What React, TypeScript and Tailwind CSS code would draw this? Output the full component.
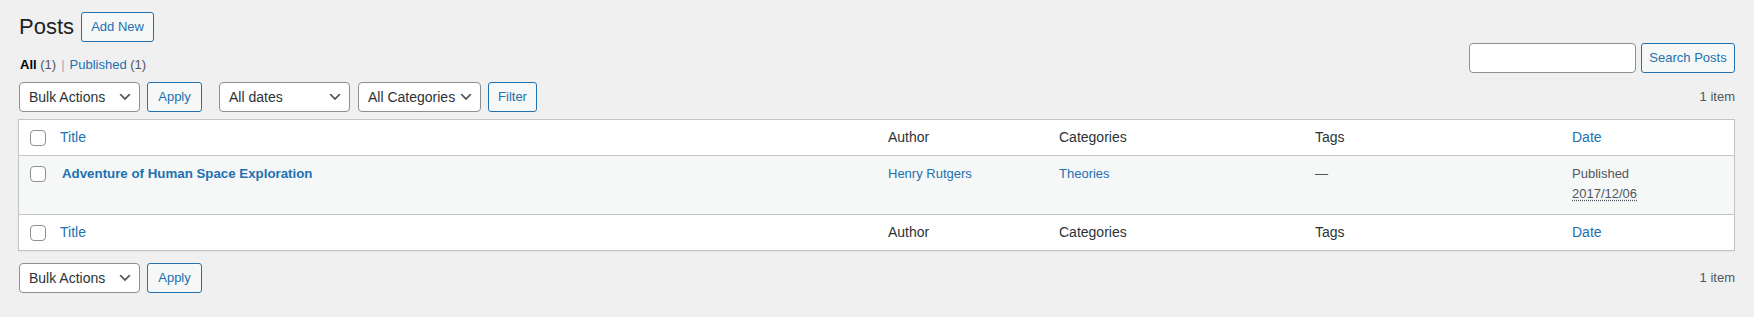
import React from "react";

// Chevron used by the WP-style selects
const Chevron = () => (
  <svg viewBox="0 0 20 20" className="w-[16px] h-[16px] absolute right-[6px] top-1/2 -translate-y-1/2" fill="#50575e">
    <path d="M5 6l5 5 5-5 2 1-7 7-7-7 2-1z" />
  </svg>
);

interface SelectProps {
  label: string;
  width: string;
  className?: string;
}

const FakeSelect = ({ label, width, className = "" }: SelectProps) => (
  <div
    className={`relative h-[30px] ${width} border border-[#8c8f94] rounded-[4px] bg-white text-[14px] text-[#2c3338] pl-[9px] flex items-center ${className}`}
  >
    {label}
    <Chevron />
  </div>
);

const Button = ({ label, width, className = "" }: { label: string; width: string; className?: string }) => (
  <button
    type="button"
    className={`h-[30px] ${width} border border-[#2271b1] rounded-[3px] bg-[#f6f7f7] text-[13px] text-[#2271b1] flex items-center justify-center ${className}`}
  >
    {label}
  </button>
);

const Checkbox = () => (
  <span className="block w-[16px] h-[16px] border border-[#8c8f94] rounded-[4px] bg-white ml-[11px]" />
);

// Header / footer row of the list table
const HeadRow = () => (
  <div className="flex h-[35px] items-center text-[14px] text-[#2c3338]">
    <div className="w-[31px] shrink-0">
      <Checkbox />
    </div>
    <div className="flex-1 pl-[10px] text-[#2271b1]">Title</div>
    <div className="w-[171px] pl-[10px]">Author</div>
    <div className="w-[256px] pl-[10px]">Categories</div>
    <div className="w-[257px] pl-[10px]">Tags</div>
    <div className="w-[172px] pl-[10px] text-[#2271b1]">Date</div>
  </div>
);

const TableNav = ({ top = false }: { top?: boolean }) => (
  <div className="flex items-center h-[30px]">
    <FakeSelect label="Bulk Actions" width="w-[121px]" className="ml-[1px]" />
    <Button label="Apply" width="w-[55px]" className="ml-[7px]" />
    {top && (
      <>
        <FakeSelect label="All dates" width="w-[131px]" className="ml-[17px]" />
        <FakeSelect label="All Categories" width="w-[123px]" className="ml-[8px]" />
        <Button label="Filter" width="w-[49px]" className="ml-[7px]" />
      </>
    )}
    <span className="ml-auto text-[13px] text-[#50575e]">1 item</span>
  </div>
);

export default function App() {
  return (
    <div className="min-h-[317px] w-full bg-[#f0f0f1] font-['Liberation_Sans',Arial,sans-serif] text-[#3c434a] overflow-hidden">
      <div className="pl-[18px] pr-[19px]">
        {/* Title row */}
        <div className="flex items-center h-[27px] mt-[13px]">
          <h1 className="text-[22px] leading-none text-[#1d2327] ml-[1px]">Posts</h1>
          <Button label="Add New" width="w-[73px]" className="ml-[7px] h-[27px]" />
        </div>

        {/* Views + search */}
        <div className="flex justify-between items-start h-[30px] mt-[3px]">
          <div className="pt-[12px] text-[13px] leading-[20px] ml-[2px]">
            <span className="text-black font-semibold">All</span>
            <span className="text-[#50575e]"> (1)</span>
            <span className="text-[#a7aaad] mx-[5px]">|</span>
            <span className="text-[#2271b1]">Published</span>
            <span className="text-[#50575e]"> (1)</span>
          </div>
          <div className="flex gap-[5px]">
            <div className="w-[167px] h-[30px] bg-white border border-[#8c8f94] rounded-[4px]" />
            <Button label="Search Posts" width="w-[94px]" />
          </div>
        </div>

        <div className="mt-[9px]">
          <TableNav top />
        </div>

        {/* List table */}
        <div className="mt-[7px] bg-white border border-[#c3c4c7] shadow-[0_1px_1px_rgba(0,0,0,0.04)]">
          <HeadRow />
          <div className="flex h-[60px] bg-[#f6f7f7] border-y border-[#c3c4c7] text-[13px] leading-[20px]">
            <div className="w-[31px] shrink-0 pt-[10px]">
              <Checkbox />
            </div>
            <div className="flex-1 pl-[12px] pt-[8px] text-[13.3px] font-bold text-[#2271b1]">
              Adventure of Human Space Exploration
            </div>
            <div className="w-[171px] pl-[10px] pt-[8px] text-[#2271b1]">Henry Rutgers</div>
            <div className="w-[256px] pl-[10px] pt-[8px] text-[#2271b1]">Theories</div>
            <div className="w-[257px] pl-[10px] pt-[8px] text-[#50575e]">—</div>
            <div className="w-[172px] pl-[10px] pt-[8px] text-[#50575e]">
              <div>Published</div>
              <div>
                <span className="underline decoration-dotted underline-offset-2">2017/12/06</span>
              </div>
            </div>
          </div>
          <HeadRow />
        </div>

        <div className="mt-[12px]">
          <TableNav />
        </div>
      </div>
    </div>
  );
}
